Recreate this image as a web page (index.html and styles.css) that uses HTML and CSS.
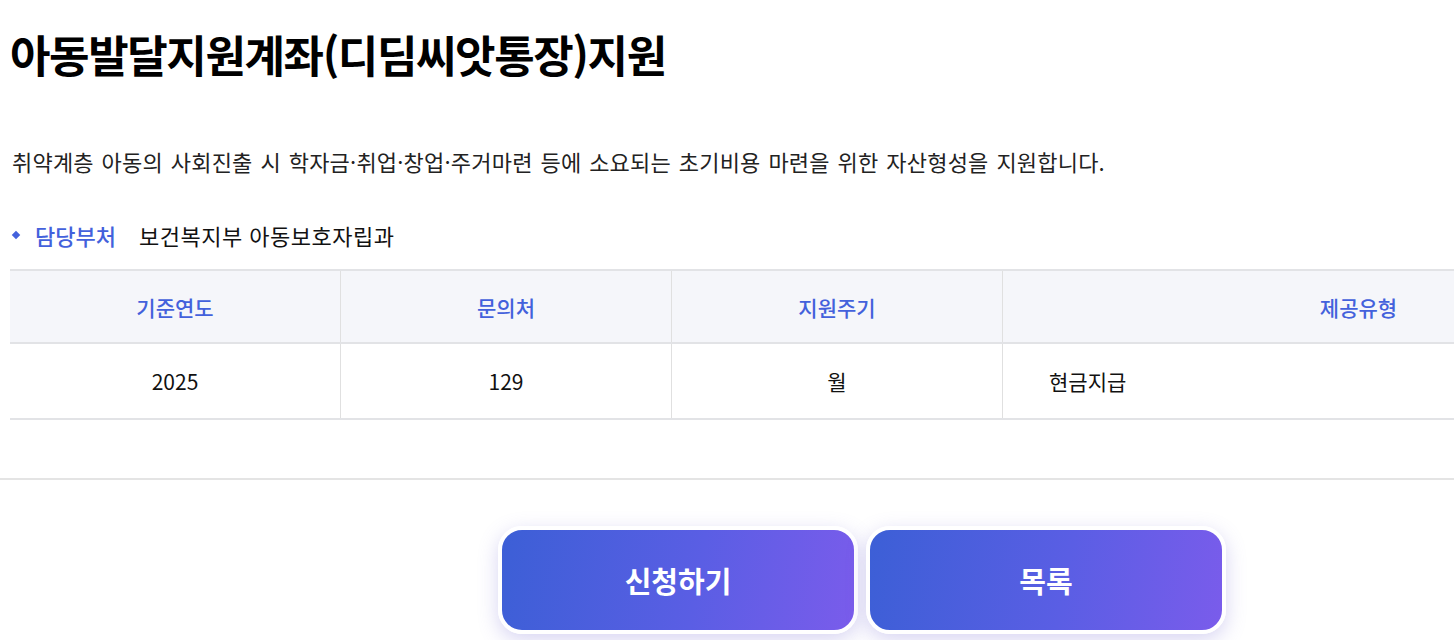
FILE: index.html
```html
<!DOCTYPE html>
<html lang="ko">
<head>
<meta charset="utf-8">
<title>아동발달지원계좌(디딤씨앗통장)지원</title>
<link rel="stylesheet" href="styles.css">
</head>
<body>
<div class="viewport">
  <div class="page">
    <h1 class="title">아동발달지원계좌(디딤씨앗통장)지원</h1>
    <p class="desc">취약계층 아동의 사회진출 시 학자금·취업·창업·주거마련 등에 소요되는 초기비용 마련을 위한 자산형성을 지원합니다.</p>
    <div class="dept">
      <span class="bullet"></span>
      <span class="dept-label">담당부처</span>
      <span class="dept-value">보건복지부 아동보호자립과</span>
    </div>
    <table class="info">
      <thead>
        <tr>
          <th class="c1">기준연도</th>
          <th class="c2">문의처</th>
          <th class="c3">지원주기</th>
          <th class="c4">제공유형</th>
        </tr>
      </thead>
      <tbody>
        <tr>
          <td>2025</td>
          <td>129</td>
          <td>월</td>
          <td class="left">현금지급</td>
        </tr>
      </tbody>
    </table>
  </div>
  <hr class="divider">
  <div class="page">
    <div class="buttons">
      <a class="btn" href="#">신청하기</a>
      <a class="btn" href="#">목록</a>
    </div>
  </div>
</div>
</body>
</html>
```

FILE: styles.css
```css
html, body {
  margin: 0;
  padding: 0;
  background: #fff;
}
body {
  font-family: "Noto Sans CJK KR", "Noto Sans", sans-serif;
  color: #111;
}
.viewport {
  width: 100%;
  overflow: hidden;
  height: 640px;
}
.page {
  width: 1704px;
  padding-left: 10px;
}
.title {
  margin: 26px 0 0;
  font-size: 44px;
  line-height: 56px;
  font-weight: 700;
  letter-spacing: -1.4px;
  color: #000;
}
.desc {
  margin: 63px 0 0 2px;
  font-size: 22px;
  line-height: 32px;
  color: #222;
  letter-spacing: 0.2px;
  word-spacing: 1.5px;
}
.dept {
  margin-top: 43px;
  display: flex;
  align-items: center;
  height: 30px;
  font-size: 22px;
}
.bullet {
  width: 6px;
  height: 6px;
  background: #4361dc;
  transform: rotate(45deg);
  margin: 0 0 0 3px;
}
.dept-label {
  color: #4361dc;
  font-weight: 500;
  margin-left: 16px;
}
.dept-value {
  margin-left: 23px;
  color: #111;
  letter-spacing: 0.5px;
}
.info {
  margin-top: 19px;
  width: 1704px;
  border-collapse: collapse;
  table-layout: fixed;
}
.info th, .info td {
  border-left: 1px solid #e0e0e0;
  text-align: center;
  padding: 0;
}
.info th:first-child, .info td:first-child {
  border-left: none;
}
.info th {
  height: 71px;
  background: #f5f6fa;
  color: #4361dc;
  font-weight: 500;
  font-size: 21px;
  border-top: 2px solid #e2e3e6;
  border-bottom: 2px solid #e2e3e6;
}
.info td {
  height: 74px;
  font-size: 21px;
  color: #111;
  border-bottom: 2px solid #e2e3e6;
}
.info .c1, .info .c2, .info .c3 { width: 330px; }
.info td.left {
  text-align: left;
  padding-left: 46px;
}
.divider {
  margin: 58px 0 0;
  border: none;
  border-top: 2px solid #e4e4e4;
  width: 100%;
}
.buttons {
  display: flex;
  justify-content: center;
  gap: 8px;
  margin-top: 46px;
}
.btn {
  display: flex;
  align-items: center;
  justify-content: center;
  width: 352px;
  height: 100px;
  border: 4px solid #fff;
  border-radius: 24px;
  background: linear-gradient(100deg, #3c5fd6 0%, #5a5ee4 55%, #7a5ceb 100%);
  color: #fff;
  font-size: 29px;
  font-weight: 700;
  text-decoration: none;
  box-shadow: 0 6px 20px rgba(110, 100, 210, 0.28);
}
```
